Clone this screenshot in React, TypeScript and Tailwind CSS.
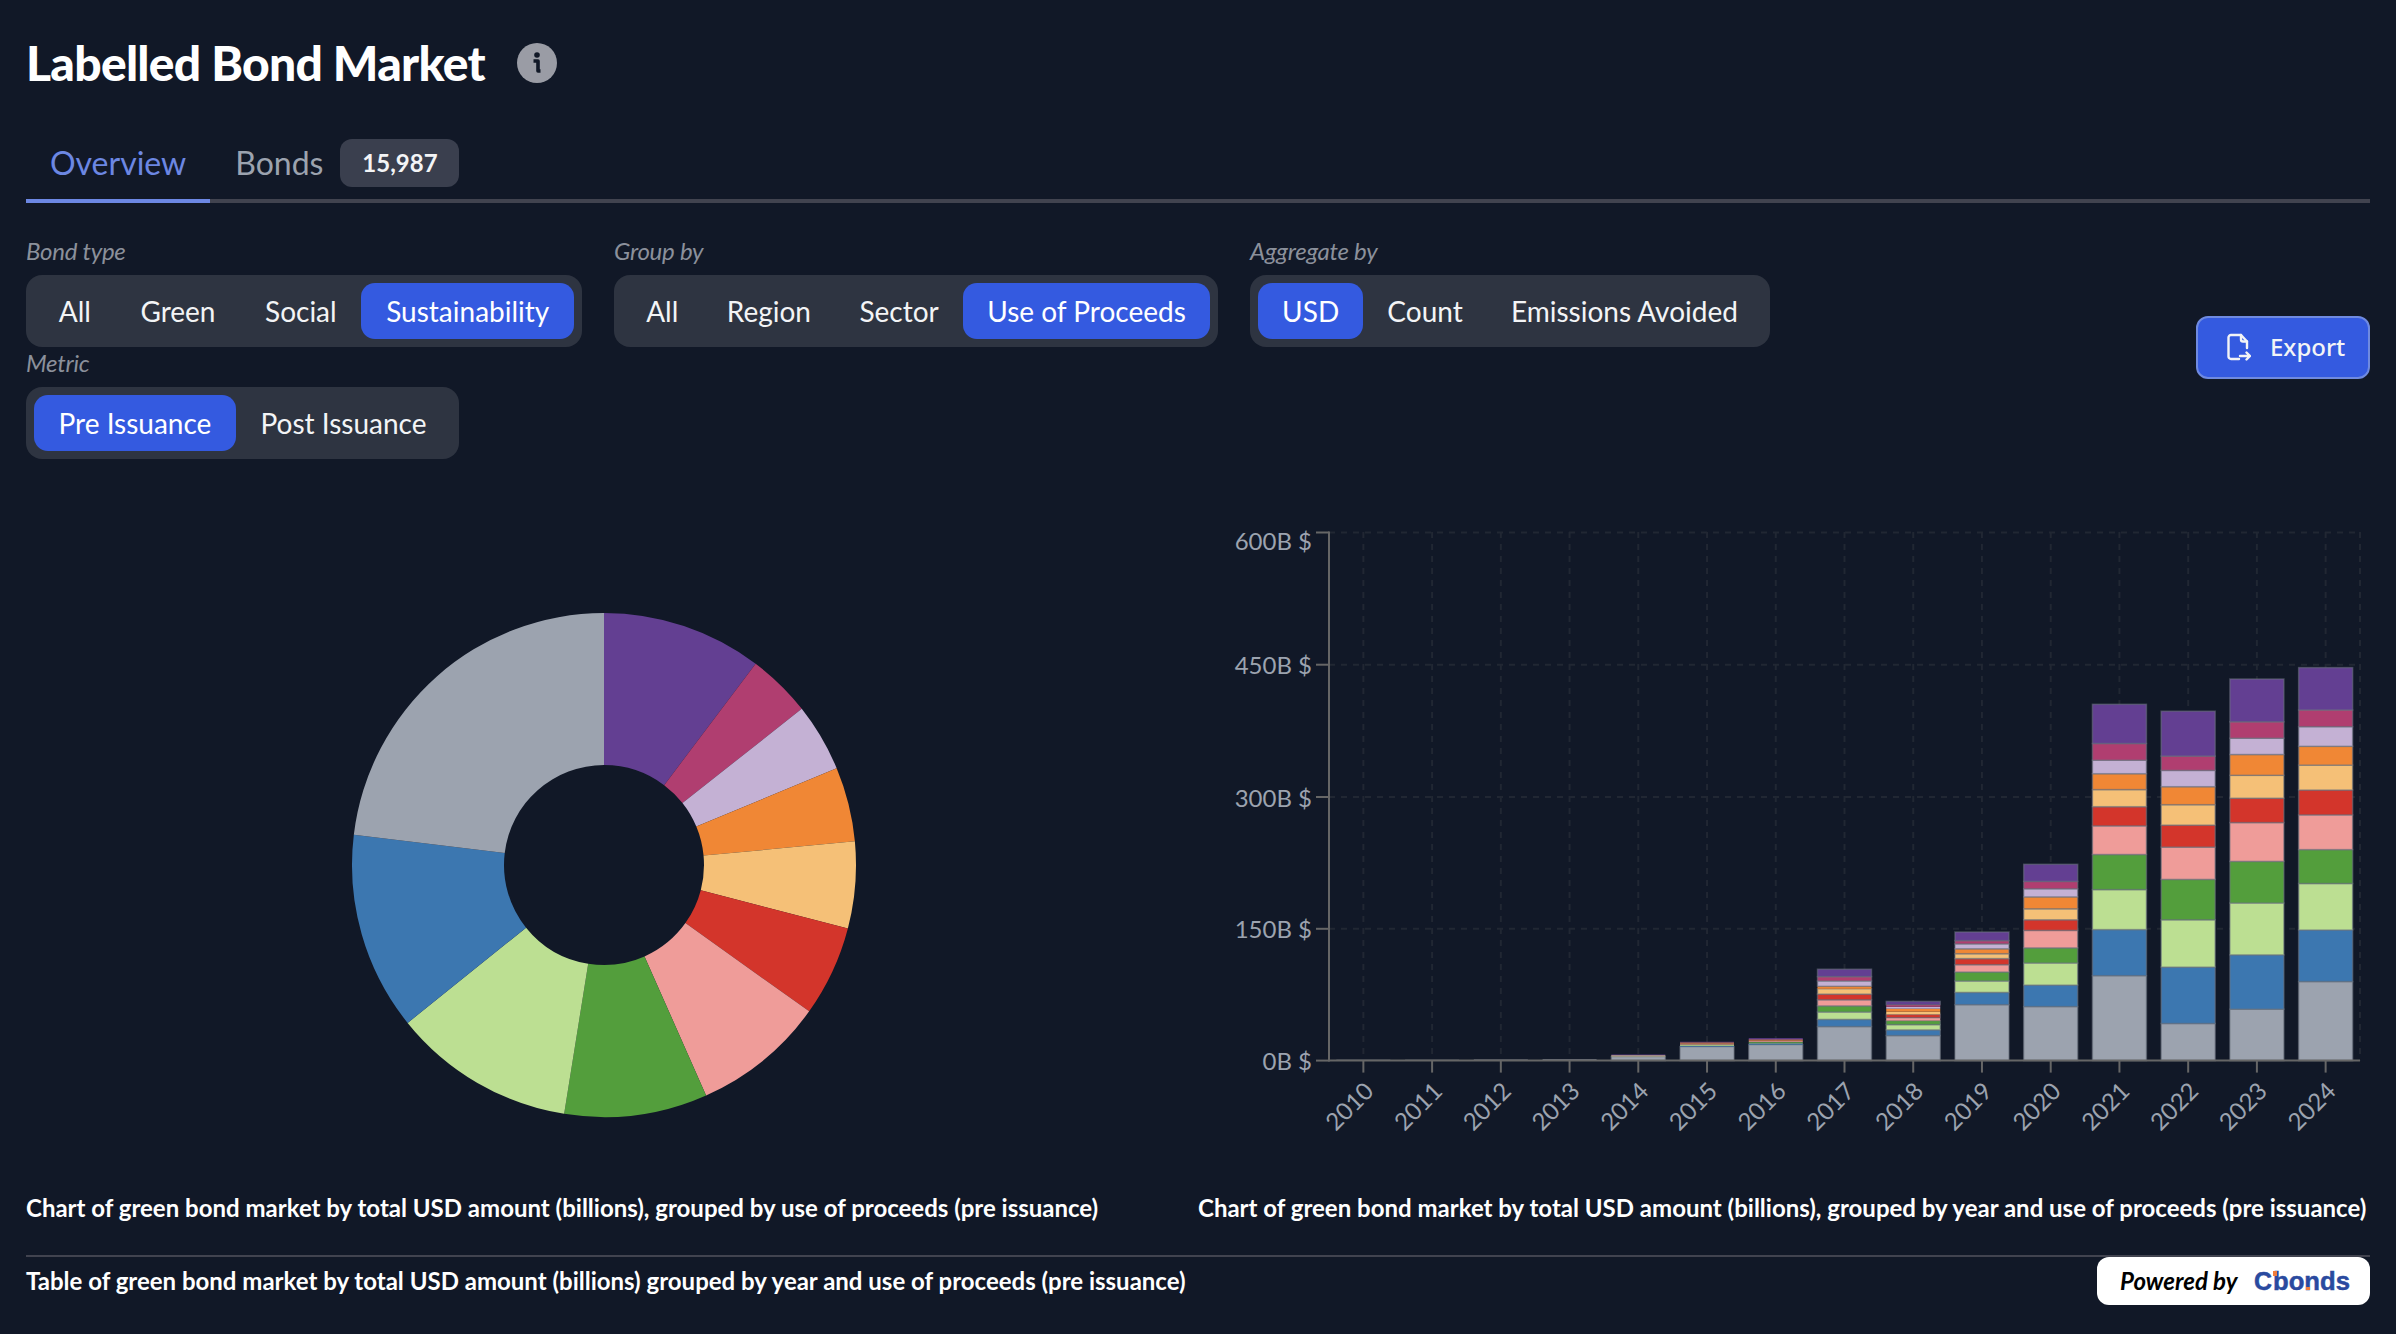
import { FC } from 'react';

const colors = [
  '#9ca3af', // gray
  '#3c77b0',
  '#bcdf92',
  '#539e3c',
  '#ef9c99',
  '#d3352b',
  '#f5c077',
  '#f08735',
  '#c4b1d4',
  '#b03e70',
  '#633f92',
];

// end angle of every slice, clockwise from 12 o'clock, same order as the bars but starting at purple
const slices = [
  { end: 37, color: '#633f92' },
  { end: 51.7, color: '#b03e70' },
  { end: 67.4, color: '#c4b1d4' },
  { end: 84.6, color: '#f08735' },
  { end: 104.6, color: '#f5c077' },
  { end: 125.5, color: '#d3352b' },
  { end: 156.1, color: '#ef9c99' },
  { end: 189.1, color: '#539e3c' },
  { end: 231.2, color: '#bcdf92' },
  { end: 276.9, color: '#3c77b0' },
  { end: 360, color: '#9ca3af' },
];

const years = [
  2010, 2011, 2012, 2013, 2014, 2015, 2016, 2017, 2018, 2019, 2020, 2021, 2022, 2023, 2024,
];

// cumulative top of each segment in device px above the baseline
const stacks: number[][] = [
  [0.8],
  [0.8],
  [1],
  [1.2],
  [4, 4.4, 4.8, 5.2, 5.6, 6],
  [14, 14.8, 15.6, 16, 16.8, 17.2, 17.6, 18, 18.2, 18.4, 18.8],
  [16, 17.2, 18, 18.8, 19.6, 20, 20.4, 20.8, 21.2, 21.6, 22.4],
  [34, 41.2, 48.6, 54.7, 60.8, 66.5, 71.8, 74.3, 79.6, 84, 91.4],
  [25, 30.7, 36, 40, 42.9, 46.2, 49, 51.9, 53.9, 55.9, 59.2],
  [55.9, 68.2, 79.6, 88.6, 95.9, 102, 106.9, 111.8, 116.7, 120, 128.6],
  [54, 75.5, 97.6, 112.7, 130.2, 140.8, 151.8, 163.7, 171.8, 179.2, 196.3],
  [84.9, 131, 171, 206.1, 234.7, 253.9, 271, 286.9, 300.4, 317.1, 356.3],
  [37.1, 93.5, 140.8, 181.2, 213.5, 235.5, 255.9, 273.9, 290.2, 304.5, 349.4],
  [51.4, 105.7, 157.6, 199.2, 238, 262.4, 285.3, 306.1, 322.4, 338.8, 381.6],
  [79, 130.6, 177.1, 211, 245.7, 270.6, 295.5, 314.3, 333.9, 350.6, 393],
];

const polar = (cx: number, cy: number, r: number, deg: number) => {
  const a = ((deg - 90) * Math.PI) / 180;
  return `${cx + r * Math.cos(a)} ${cy + r * Math.sin(a)}`;
};

const Donut: FC = () => {
  const cx = 604;
  const cy = 865;
  const R = 252;
  const r = 100;
  let start = 0;
  return (
    <svg viewBox="26 490 1156 690" className="block h-[690px] w-full">
      {slices.map(s => {
        const large = s.end - start > 180 ? 1 : 0;
        const d = `M${polar(cx, cy, R, start)}A${R} ${R} 0 ${large} 1 ${polar(cx, cy, R, s.end)}L${polar(cx, cy, r, s.end)}A${r} ${r} 0 ${large} 0 ${polar(cx, cy, r, start)}Z`;
        start = s.end;
        return <path key={s.color} d={d} fill={s.color} />;
      })}
    </svg>
  );
};

const BarChart: FC = () => {
  const base = 1060.6;
  const left = 1329;
  const right = 2360;
  const band = (right - left) / 15;
  const ticks = [
    { label: '0B $', y: base, ty: base },
    { label: '150B $', y: 928.8, ty: 928.8 },
    { label: '300B $', y: 797, ty: 797 },
    { label: '450B $', y: 664.7, ty: 664.7 },
    { label: '600B $', y: 532.5, ty: 540.5 },
  ];
  return (
    <svg viewBox="1198 490 1172 690" className="block h-[690px] w-full">
      {ticks.slice(1).map(t => (
        <line key={t.y} x1={left} x2={right} y1={t.y} y2={t.y} stroke="#212733" strokeWidth="2" strokeDasharray="6 6" />
      ))}
      {years.map((yr, i) => {
        const x = left + band * (i + 0.5);
        return <line key={yr} x1={x} x2={x} y1={532} y2={base} stroke="#212733" strokeWidth="2" strokeDasharray="6 6" />;
      })}
      <line x1={right} x2={right} y1={532} y2={base} stroke="#212733" strokeWidth="2" strokeDasharray="6 6" />

      {stacks.map((stack, i) => {
        const x = left + band * (i + 0.5) - 27;
        return stack.map((top, j) => {
          const prev = j === 0 ? 0 : stack[j - 1];
          return (
            <rect
              key={`${i}-${j}`}
              x={x}
              y={base - top}
              width="54"
              height={top - prev}
              fill={colors[stack.length === 6 && j > 0 ? j * 2 : j]}
              stroke="#6b7280"
              strokeOpacity="0.55"
              strokeWidth={stack.length > 1 && top - prev > 3 ? 1.5 : 0}
            />
          );
        });
      })}

      <line x1={left} x2={left} y1={531.5} y2={base + 1} stroke="#666" strokeWidth="2" />
      <line x1={left} x2={right} y1={base} y2={base} stroke="#666" strokeWidth="2" />
      {ticks.map(t => (
        <g key={t.label}>
          <line x1={1316} x2={left} y1={t.y} y2={t.y} stroke="#666" strokeWidth="2" />
          <text x={1312} y={t.ty} textAnchor="end" dominantBaseline="central" fill="#9ca3af" fontSize="24">
            {t.label}
          </text>
        </g>
      ))}
      {years.map((yr, i) => {
        const x = left + band * (i + 0.5);
        return (
          <g key={yr}>
            <line x1={x} x2={x} y1={base} y2={base + 12} stroke="#666" strokeWidth="2" />
            <text
              x={x + 5}
              y={1086}
              textAnchor="end"
              dominantBaseline="central"
              fill="#9ca3af"
              fontSize="24"
              transform={`rotate(-45 ${x + 5} 1086)`}
            >
              {yr}
            </text>
          </g>
        );
      })}
    </svg>
  );
};

const ButtonGroup: FC<{ label: string; options: string[]; active: string; width: string }> = ({
  label,
  options,
  active,
  width,
}) => (
  <div className={width}>
    <div className="mb-2 text-[24px] italic leading-8 tracking-[-0.01em] text-[#8b909b]">{label}</div>
    <div className="flex h-[72px] items-center rounded-2xl bg-[#2e3441] px-2">
      {options.map(o => (
        <button
          key={o}
          className={
            o === active
              ? 'h-14 grow rounded-[14px] bg-[#345ae0] px-6 text-[28px] text-white'
              : 'h-14 grow rounded-[14px] px-6 text-[28px] text-[#f3f4f6]'
          }
        >
          {o}
        </button>
      ))}
    </div>
  </div>
);

export default function App() {
  return (
    <div className="min-h-screen bg-[#111827] px-[26px] font-[Lato,sans-serif] text-white">
      <div className="flex items-center gap-8 pt-[31px]">
        <h1 className="text-[48px] font-black leading-[64px] tracking-[-0.015em]">Labelled Bond Market</h1>
        <svg viewBox="0 0 40 40" className="h-10 w-10">
          <circle cx="20" cy="20" r="20" fill="#9a9ca5" />
          <circle cx="20" cy="12" r="2.8" fill="#111827" />
          <path d="M16.5 18H21v10h2.5" fill="none" stroke="#111827" strokeWidth="3.6" strokeLinejoin="round" />
        </svg>
      </div>

      <div className="mt-8 flex h-[76px] items-center border-b-4 border-[#41434f]">
        <div className="-mb-1 flex h-[76px] items-center border-b-4 border-[#6c87e3] px-6 text-[32px] text-[#6c87e3]">
          Overview
        </div>
        <div className="flex items-center pl-[25px] text-[32px] text-[#9ca3af]">Bonds</div>
        <div className="ml-[17px] flex h-12 w-[119px] items-center justify-center rounded-xl bg-[#3a3f4e] text-[24px] font-bold text-[#f3f4f6]">
          15,987
        </div>
      </div>

      <div className="mt-8 flex items-center justify-between">
        <div className="flex min-w-0 flex-1 flex-wrap gap-x-8">
          <ButtonGroup width="w-[556px]" label="Bond type" options={['All', 'Green', 'Social', 'Sustainability']} active="Sustainability" />
          <ButtonGroup width="w-[604px]" label="Group by" options={['All', 'Region', 'Sector', 'Use of Proceeds']} active="Use of Proceeds" />
          <ButtonGroup width="w-[520px]" label="Aggregate by" options={['USD', 'Count', 'Emissions Avoided']} active="USD" />
          <ButtonGroup width="w-[433px]" label="Metric" options={['Pre Issuance', 'Post Issuance']} active="Pre Issuance" />
        </div>
        <button className="flex h-[63px] w-[174px] shrink-0 items-center gap-[19px] rounded-xl border-2 border-[#6f8ae0] bg-[#345ae0] pl-[29px] font-['Noto_Sans',sans-serif] text-[24px] font-medium text-[#f3f4f6]">
          <svg viewBox="0 0 24 28" className="h-7 w-6" fill="none" stroke="currentColor" strokeWidth="2.4" strokeLinecap="round" strokeLinejoin="round">
            <path d="M20 15V8.5L14 2H4a2.5 2.5 0 0 0-2.5 2.5v19A2.5 2.5 0 0 0 4 26h8" />
            <path d="M14 2v4.5a2 2 0 0 0 2 2h4" />
            <path d="M13 23h10M19.5 19.5L23 23l-3.5 3.5" />
          </svg>
          Export
        </button>
      </div>

      <div className="mt-[31px] flex gap-4">
        <div className="w-[1156px]">
          <Donut />
          <p className="mt-3 whitespace-nowrap text-[24px] font-bold leading-8">
            Chart of green bond market by total USD amount (billions), grouped by use of proceeds (pre issuance)
          </p>
        </div>
        <div className="min-w-0 flex-1">
          <BarChart />
          <p className="mt-3 whitespace-nowrap text-[24px] font-bold leading-8">
            Chart of green bond market by total USD amount (billions), grouped by year and use of proceeds (pre issuance)
          </p>
        </div>
      </div>

      <div className="mt-[31px] flex items-start justify-between border-t-2 border-[#41434f]">
        <p className="whitespace-nowrap text-[24px] font-bold leading-[48px]">
          Table of green bond market by total USD amount (billions) grouped by year and use of proceeds (pre issuance)
        </p>
        <div className="flex h-12 w-[273px] items-center gap-4 rounded-xl bg-white pl-[23px]">
          <span className="whitespace-nowrap text-[24px] font-bold italic text-black">Powered by</span>
          <svg viewBox="0 0 100 32" className="h-8 w-[100px]">
            <g fill="#2a4a9f" stroke="#2a4a9f" strokeWidth="0.5" fontFamily="Liberation Sans" fontWeight="700" fontSize="26">
              <text x="0" y="25" textLength="18" lengthAdjust="spacingAndGlyphs">
                C
              </text>
              <text x="19" y="25" textLength="77" lengthAdjust="spacingAndGlyphs">
                bonds
              </text>
            </g>
            <rect x="19" y="6" width="4" height="5" fill="#ef7d3c" />
            <rect x="52" y="22" width="4" height="3" fill="#ef7d3c" />
          </svg>
        </div>
      </div>
    </div>
  );
}
